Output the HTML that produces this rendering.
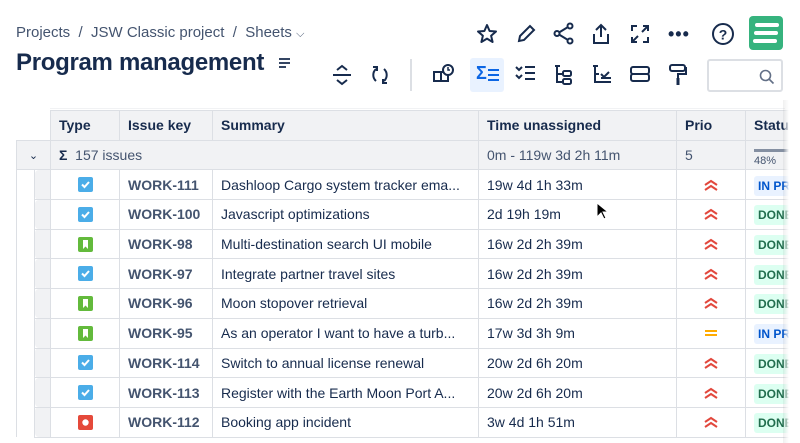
<!DOCTYPE html>
<html><head><meta charset="utf-8"><style>
*{box-sizing:border-box;margin:0;padding:0}
body{width:800px;height:443px;overflow:hidden;background:#fff;font-family:"Liberation Sans",sans-serif;color:#172b4d;position:relative}
.bc{position:absolute;left:16px;top:24px;font-size:15px;color:#44546f}
.title{position:absolute;left:16px;top:49px;font-size:24px;font-weight:bold;color:#172b4d;letter-spacing:-0.3px}
.ic{position:absolute}
svg{display:block}
table{position:absolute;left:16px;top:110px;border-collapse:collapse;font-size:14px;table-layout:fixed;width:789px}
td,th{height:29.7px;border:1px solid #dcdfe4;padding:0 8px;white-space:nowrap;overflow:hidden;text-align:left}
th{background:#f1f2f4;font-weight:bold;font-size:14px}
.g td{background:#f1f2f4;color:#44546f}
.k{color:#44546f;font-weight:bold}
.ty{text-align:center}
.ty .b{margin:auto}
.b{display:block;width:15px;height:15px;border-radius:2px}
.lz{font-size:12px;font-weight:bold;padding:3px 4px;border-radius:3px}
.ip{background:#e9f2ff;color:#0055cc}.dn{background:#dcfff1;color:#216e4e}
</style></head><body>
<div class="bc">Projects &nbsp;/&nbsp; JSW Classic project &nbsp;/&nbsp; Sheets <span style="font-size:11px">&#9013;</span></div>
<div class="title">Program management</div>
<svg class="ic" style="left:278px;top:57px" width="14" height="12"><path d="M1 2h11M1 6h11M1 10h7" stroke="#172b4d" stroke-width="1.8"/></svg>
<svg class="ic" style="left:476px;top:23px" width="22" height="22" viewBox="0 0 22 22"><path d="M11 2l2.6 6 6.4.5-4.9 4.2 1.5 6.3L11 15.6 5.4 19l1.5-6.3L2 8.5 8.4 8z" fill="none" stroke="#172b4d" stroke-width="2" stroke-linejoin="round"/></svg>
<svg class="ic" style="left:515px;top:23px" width="22" height="22"><path d="M4 18l1-5L15 3l4 4L9 17z" fill="none" stroke="#172b4d" stroke-width="2"/></svg>
<svg class="ic" style="left:553px;top:22px" width="22" height="24"><circle cx="17" cy="4" r="2.5" fill="none" stroke="#172b4d" stroke-width="2"/><circle cx="17" cy="19" r="2.5" fill="none" stroke="#172b4d" stroke-width="2"/><circle cx="4" cy="11.5" r="2.5" fill="none" stroke="#172b4d" stroke-width="2"/><path d="M6 10.5L15 5M6 12.5l9 5.5" stroke="#172b4d" stroke-width="2"/></svg>
<svg class="ic" style="left:591px;top:22px" width="20" height="24"><path d="M10 3v12M5 8l5-5 5 5M3 12v9h14v-9" fill="none" stroke="#172b4d" stroke-width="2"/></svg>
<svg class="ic" style="left:630px;top:24px" width="20" height="20"><path d="M2 7V2h5M13 2h5v5M18 13v5h-5M7 18H2v-5M3 17l5-5M17 3l-5 5" fill="none" stroke="#172b4d" stroke-width="2"/></svg>
<div class="ic" style="left:668px;top:24px;font-size:18px;font-weight:bold;letter-spacing:1px">•••</div>
<svg class="ic" style="left:711px;top:22px" width="24" height="24"><circle cx="12" cy="12" r="10" fill="none" stroke="#172b4d" stroke-width="2"/><text x="12" y="17.5" font-size="14" font-weight="bold" text-anchor="middle" fill="#172b4d" font-family="Liberation Sans">?</text></svg>
<div class="ic" style="left:749px;top:16px;width:34px;height:34px;background:#36b37e;border-radius:4px"><svg width="34" height="34"><path d="M8 9h20M7 17h20M6 25h20" stroke="#fff" stroke-width="4" stroke-linecap="round"/></svg></div>
<svg class="ic" style="left:331px;top:63px" width="22" height="24"><path d="M2 12h18M6 7l5-4 5 4M6 17l5 4 5-4" fill="none" stroke="#172b4d" stroke-width="2"/></svg>
<svg class="ic" style="left:370px;top:64px" width="20" height="22"><path d="M6 5a8 8 0 0 0 0 12M14 5a8 8 0 0 1 0 12M3 3h4v4M17 19h-4v-4" fill="none" stroke="#172b4d" stroke-width="2"/></svg>
<div class="ic" style="left:410px;top:59px;width:2px;height:32px;background:#dcdfe4"></div>
<svg class="ic" style="left:432px;top:63px" width="24" height="22"><rect x="2" y="9" width="14" height="9" fill="none" stroke="#172b4d" stroke-width="2"/><path d="M9 9v9" stroke="#172b4d" stroke-width="2"/><circle cx="16" cy="7" r="5" fill="#fff" stroke="#172b4d" stroke-width="2"/><path d="M16 4v3h2" stroke="#172b4d" stroke-width="1.5" fill="none"/></svg>
<div class="ic" style="left:470px;top:58px;width:34px;height:34px;background:#e9f2ff;border-radius:3px"><div style="position:absolute;left:6px;top:5px;color:#0c66e4;font-weight:bold;font-size:18px">Σ</div><svg style="position:absolute;left:18px;top:10px" width="12" height="14"><path d="M0 2h11M0 7h11M0 12h11" stroke="#0c66e4" stroke-width="2"/></svg></div>
<svg class="ic" style="left:514px;top:63px" width="24" height="22"><path d="M2 4l3 3 3-3M2 12l3 3 3-3M11 4h10M11 10h10M11 16h10" fill="none" stroke="#172b4d" stroke-width="2"/></svg>
<svg class="ic" style="left:554px;top:63px" width="20" height="24"><path d="M3 2v18M1 3h5M3 11h5M3 19h5" fill="none" stroke="#172b4d" stroke-width="2"/><rect x="9" y="8" width="8" height="5" rx="1.5" fill="none" stroke="#172b4d" stroke-width="2"/><rect x="9" y="16" width="8" height="5" rx="1.5" fill="none" stroke="#172b4d" stroke-width="2"/></svg>
<svg class="ic" style="left:592px;top:63px" width="22" height="24"><path d="M3 2v18M1 3h5M3 11h4M3 19h16M9 11l3 3 5-5M9 15h10" fill="none" stroke="#172b4d" stroke-width="2"/></svg>
<svg class="ic" style="left:629px;top:64px" width="22" height="22"><rect x="2" y="3" width="18" height="7" rx="2" fill="none" stroke="#172b4d" stroke-width="2"/><rect x="2" y="10" width="18" height="7" rx="2" fill="none" stroke="#172b4d" stroke-width="2"/></svg>
<svg class="ic" style="left:668px;top:62px" width="20" height="26"><rect x="2" y="3" width="15" height="6" rx="2" fill="none" stroke="#172b4d" stroke-width="2"/><path d="M17 6h1v6H10v4" fill="none" stroke="#172b4d" stroke-width="2"/><rect x="8.5" y="16" width="3" height="7" fill="#172b4d"/></svg>
<div class="ic" style="left:707px;top:59px;width:76px;height:33px;border:2px solid #dcdfe4;border-radius:3px"><svg style="position:absolute;left:50px;top:8px" width="16" height="16"><circle cx="6.5" cy="6.5" r="5" fill="none" stroke="#626f86" stroke-width="1.6"/><path d="M10 10l4.5 4.5" stroke="#626f86" stroke-width="1.6"/></svg></div>
<div class="ic" style="left:50px;top:108px;width:735px;height:1px;background:#f1f2f4"></div>
<table>
<colgroup><col style="width:18px"><col style="width:16px"><col style="width:69px"><col style="width:93px"><col style="width:266px"><col style="width:198px"><col style="width:69px"><col style="width:60px"></colgroup>
<tr><th style="background:#fff;border:none;border-bottom:1px solid #dcdfe4" colspan="2"></th><th>Type</th><th>Issue key</th><th>Summary</th><th>Time unassigned</th><th>Prio</th><th>Status</th></tr>
<tr class="g"><td colspan="2" style="text-align:center;font-size:11px;color:#172b4d;padding:0">&#8964;</td><td colspan="3"><b style="color:#172b4d">Σ</b>&nbsp; 157 issues</td><td>0m - 119w 3d 2h 11m</td><td>5</td><td style="font-size:11px;padding-top:6px"><div style="height:3px;background:#8590a2;width:40px;margin-bottom:3px"></div>48%</td></tr>
</table>
<script>
var R=[["b","WORK-111","Dashloop Cargo system tracker ema...","19w 4d 1h 33m","h","ip"],["b","WORK-100","Javascript optimizations","2d 19h 19m","h","dn"],["g","WORK-98","Multi-destination search UI mobile","16w 2d 2h 39m","h","dn"],["b","WORK-97","Integrate partner travel sites","16w 2d 2h 39m","h","dn"],["g","WORK-96","Moon stopover retrieval","16w 2d 2h 39m","h","dn"],["g","WORK-95","As an operator I want to have a turb...","17w 3d 3h 9m","m","ip"],["b","WORK-114","Switch to annual license renewal","20w 2d 6h 20m","h","dn"],["b","WORK-113","Register with the Earth Moon Port A...","20w 2d 6h 20m","h","dn"],["r","WORK-112","Booking app incident","3w 4d 1h 51m","h","dn"]];
var t=document.querySelector('table'),h='';
R.forEach(function(r){var ic=r[0]=='b'?'<span class="b" style="background:#4bade8"><svg width="15" height="15"><path d="M4 7.5l2.5 2.5 4.5-5" stroke="#fff" stroke-width="2" fill="none"/></svg></span>':r[0]=='g'?'<span class="b" style="background:#63ba3c"><svg width="15" height="15"><path d="M5 3h5v9l-2.5-2.5L5 12z" fill="#fff"/></svg></span>':'<span class="b" style="background:#e5493a"><svg width="15" height="15"><circle cx="7.5" cy="7.5" r="3.2" fill="#fff"/></svg></span>';
var p=r[4]=='h'?'<svg width="16" height="12" style="margin:auto"><path d="M2 6l6-4 6 4M2 11l6-4 6 4" stroke="#e2483d" stroke-width="2" fill="none"/></svg>':'<svg width="16" height="12" style="margin:auto"><path d="M2 4h12M2 8h12" stroke="#ffab00" stroke-width="2"/></svg>';
h+='<tr><td style="border:none;border-left:1px solid #dcdfe4;background:#fff"></td><td style="background:#f1f2f4;border-radius:4px 0 0 4px"></td><td class="ty">'+ic+'</td><td class="k">'+r[1]+'</td><td>'+r[2]+'</td><td>'+r[3]+'</td><td>'+p+'</td><td><span class="lz '+r[5]+'">'+(r[5]=='ip'?'IN PROGRESS':'DONE')+'</span></td></tr>';});
t.insertAdjacentHTML('beforeend',h);
</script>
<div class="ic" style="left:783px;top:100px;width:17px;height:343px;background:linear-gradient(90deg,rgba(0,0,0,0.06),#fff 6px)"></div>
<svg class="ic" style="left:596px;top:202px" width="12" height="18"><path d="M1 1v14l4-4 3 6 2-1-3-6h5z" fill="#000" stroke="#fff" stroke-width="1"/></svg>
</body></html>
